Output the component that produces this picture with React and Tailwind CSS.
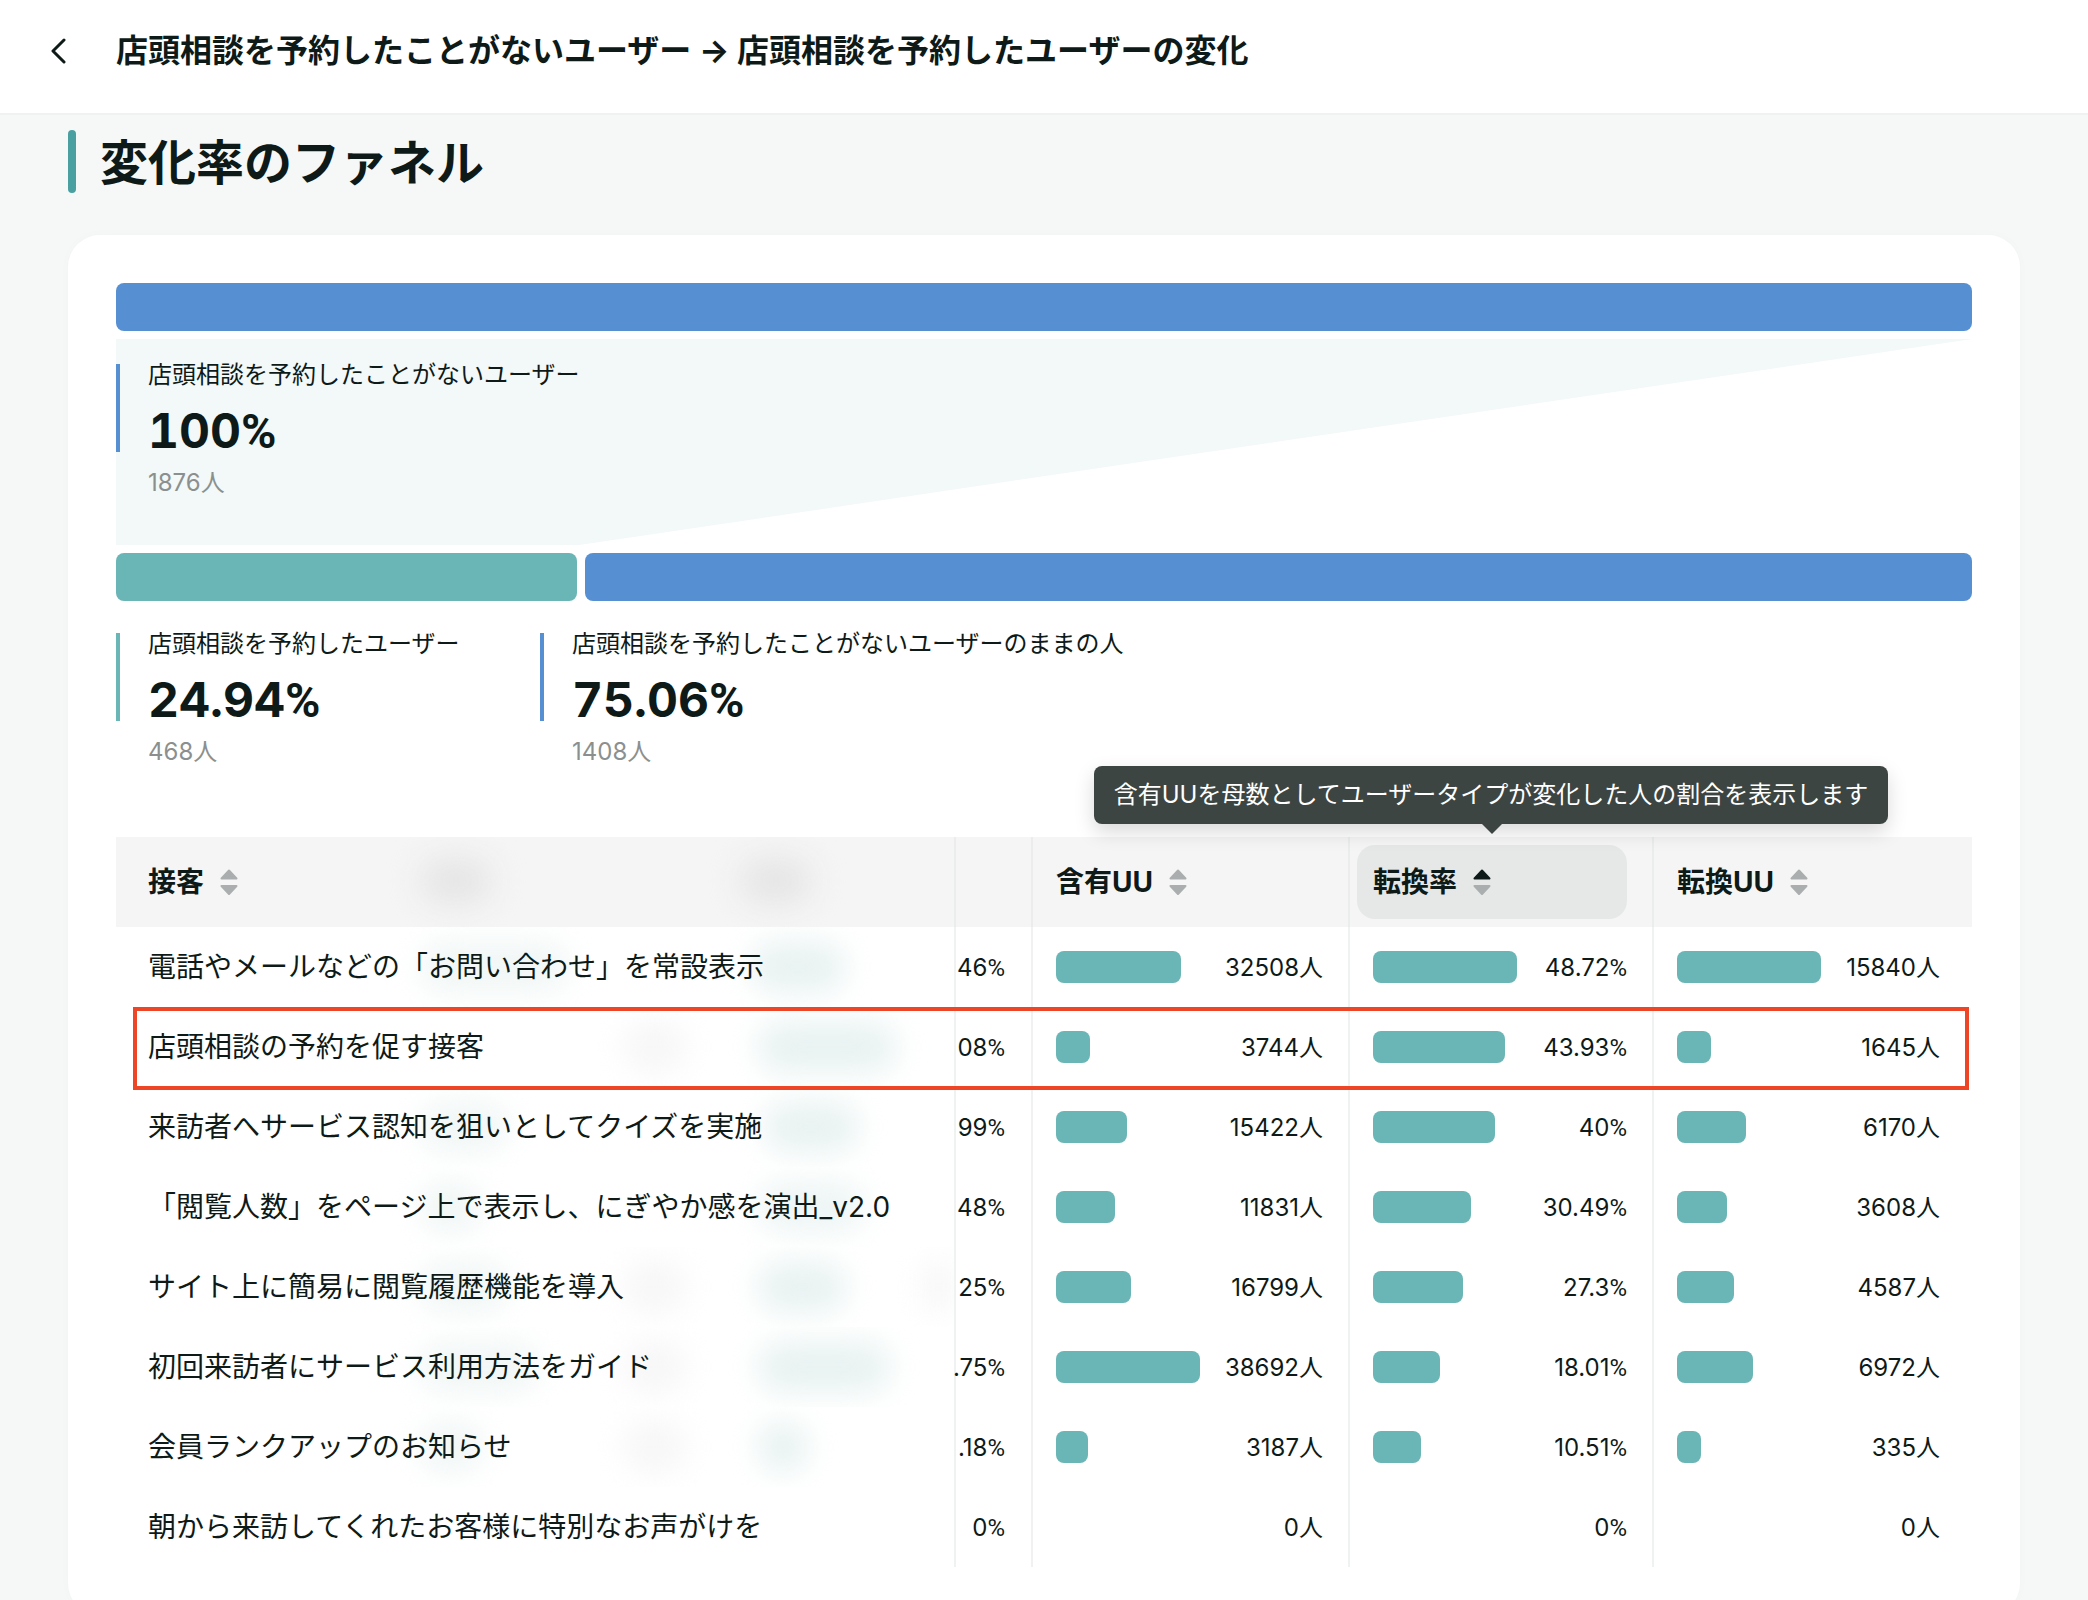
const rows = [
  { name: "電話やメールなどの「お問い合わせ」を常設表示", p: "46", a: [125, "32508人"], b: [144, "48.72"], c: [144, "15840人"], blobs: [[303, 150, "bg-[#f1f7f6]"], [634, 96, "bg-[#e9f3f2]"]] },
  { name: "店頭相談の予約を促す接客", p: "08", a: [34, "3744人"], b: [132, "43.93"], c: [34, "1645人"], blobs: [[507, 64, "bg-[#f7f7f7]"], [641, 140, "bg-[#e9f3f2]"]] },
  { name: "来訪者へサービス認知を狙いとしてクイズを実施", p: "99", a: [71, "15422人"], b: [122, "40"], c: [69, "6170人"], blobs: [[303, 90, "bg-[#f1f7f6]"], [647, 96, "bg-[#e9f3f2]"]] },
  { name: "「閲覧人数」をページ上で表示し、にぎやか感を演出_v2.0", p: "48", a: [59, "11831人"], b: [98, "30.49"], c: [50, "3608人"], blobs: [[303, 64, "bg-[#f1f7f6]"], [641, 108, "bg-[#eef6f5]"]] },
  { name: "サイト上に簡易に閲覧履歴機能を導入", p: "25", a: [75, "16799人"], b: [90, "27.3"], c: [57, "4587人"], blobs: [[303, 90, "bg-[#f1f7f6]"], [507, 64, "bg-[#f7f7f7]"], [641, 90, "bg-[#e9f3f2]"], [806, 33, "bg-[#f7f7f7]"]] },
  { name: "初回来訪者にサービス利用方法をガイド", p: ".75", a: [144, "38692人"], b: [67, "18.01"], c: [76, "6972人"], blobs: [[303, 120, "bg-[#f1f7f6]"], [507, 64, "bg-[#f7f7f7]"], [641, 134, "bg-[#e9f3f2]"]] },
  { name: "会員ランクアップのお知らせ", p: ".18", a: [32, "3187人"], b: [48, "10.51"], c: [24, "335人"], blobs: [[303, 64, "bg-[#f1f7f6]"], [507, 64, "bg-[#f7f7f7]"], [641, 52, "bg-[#e9f3f2]"]] },
  { name: "朝から来訪してくれたお客様に特別なお声がけを", p: "0", a: [0, "0人"], b: [0, "0"], c: [0, "0人"], blobs: [] },
];

function Pct({ v }) {
  return (
    <>
      {v}
      <span className="font-[Roboto,sans-serif]">%</span>
    </>
  );
}

function Sort({ active }) {
  return (
    <svg width="18" height="26" viewBox="0 0 18 26" className="shrink-0">
      <polygon points="9,1.5 16.5,9.5 1.5,9.5" fill={active ? "#0e1a18" : "#abaeae"} stroke={active ? "#0e1a18" : "#abaeae"} strokeWidth="2" strokeLinejoin="round" />
      <polygon points="1.5,17 16.5,17 9,25" fill="#abaeae" stroke="#abaeae" strokeWidth="2" strokeLinejoin="round" />
    </svg>
  );
}

function Stat({ label, pct, count, border }) {
  return (
    <div>
      <div className={`h-[88px] border-l-4 pl-7 ${border}`}>
        <div className="text-[24px] leading-[22px] whitespace-nowrap">{label}</div>
        <div className="mt-[22px] text-[48px] leading-[46px] font-bold tabular-nums"><Pct v={pct} /></div>
      </div>
      <div className="mt-[13px] pl-8 text-[24px] leading-9 text-[#8b908f]">{count}</div>
    </div>
  );
}

function BarCell({ bar, pr, pct }) {
  return (
    <div className={`flex h-20 items-center justify-between border-l-2 border-[#f0f1f1] pl-[23px] ${pr}`}>
      {bar[0] > 0 ? <div className="h-8 rounded-lg bg-[#6ab5b5]" style={{ width: bar[0] }} /> : <div />}
      <div className="relative top-[1px] text-[24px] leading-8">{pct ? <Pct v={bar[1]} /> : bar[1]}</div>
    </div>
  );
}

export default function App() {
  return (
    <div className="h-[1600px] overflow-hidden bg-[#f6f8f7] font-[Inter,'Noto_Sans_CJK_JP',sans-serif] text-[#0e1a18]">
      <header className="flex h-[115px] items-start border-b-2 border-[#f0f2f1] bg-white pl-[49px] pt-[31px]">
        <svg width="18" height="26" viewBox="0 0 18 26" className="mt-[7px]" fill="none" stroke="#0e1a18" strokeWidth="3" strokeLinecap="round" strokeLinejoin="round">
          <path d="M15 2 L4 13 L15 24" />
        </svg>
        <h1 className="ml-[49px] text-[32px] leading-10 font-bold whitespace-nowrap">店頭相談を予約したことがないユーザー → 店頭相談を予約したユーザーの変化</h1>
      </header>

      <main className="px-[68px] pt-[15px]">
        <div className="flex h-[63px] items-center gap-[24px]">
          <div className="h-full w-2 rounded-full bg-[#4a9fa0]" />
          <h2 className="relative top-[1px] text-[48px] leading-[63px] font-bold">変化率のファネル</h2>
        </div>

        <section className="mt-[42px] rounded-[32px] bg-white p-12 shadow-[0_0_12px_rgba(0,0,0,0.02)]">
          <div className="h-12 rounded-lg bg-[#5790d2]" />

          <div className="relative mt-2 h-[206px] pt-[25px]">
            <div className="absolute inset-0 bg-[#f3f8f8] [clip-path:polygon(0_0,100%_0,24.94%_100%,0_100%)]" />
            <div className="relative">
              <Stat label="店頭相談を予約したことがないユーザー" pct="100" count="1876人" border="border-[#5790d2]" />
            </div>
          </div>

          <div className="mt-2 flex gap-2">
            <div className="h-12 w-[461px] rounded-lg bg-[#6ab5b5]" />
            <div className="h-12 flex-1 rounded-lg bg-[#5790d2]" />
          </div>

          <div className="mt-8 flex">
            <div className="w-[424px]">
              <Stat label="店頭相談を予約したユーザー" pct="24.94" count="468人" border="border-[#6ab5b5]" />
            </div>
            <Stat label="店頭相談を予約したことがないユーザーのままの人" pct="75.06" count="1408人" border="border-[#5790d2]" />
          </div>

          <div className="relative mt-[67px]">
            <div className="grid h-[90px] grid-cols-[838px_77px_317px_304px_320px] overflow-hidden bg-[#f5f5f5] text-[28px] font-bold">
              <div className="relative flex items-center gap-4 pl-8">
                <div className="absolute left-[305px] top-[22px] h-[44px] w-[70px] rounded-full bg-[#e4e4e4] blur-[16px]" />
                <div className="absolute left-[625px] top-[22px] h-[44px] w-[70px] rounded-full bg-[#e4e4e4] blur-[16px]" />
                <span>接客</span>
                <Sort />
              </div>
              <div className="border-l-2 border-[#ebecec]" />
              <div className="flex items-center gap-4 border-l-2 border-[#ebecec] pl-[23px]">
                <span>含有UU</span>
                <Sort />
              </div>
              <div className="relative border-l-2 border-[#ebecec]">
                <div className="absolute left-[7px] top-2 bottom-2 w-[270px] rounded-[18px] bg-[#e6e8e8]" />
                <div className="relative flex h-full items-center gap-4 pl-[23px]">
                  <span>転換率</span>
                  <Sort active />
                </div>
              </div>
              <div className="flex items-center gap-4 border-l-2 border-[#ebecec] pl-[23px]">
                <span>転換UU</span>
                <Sort />
              </div>
            </div>

            {rows.map((r) => (
              <div key={r.name} className="grid h-20 grid-cols-[838px_77px_317px_304px_320px]">
                <div className="relative flex items-center overflow-hidden pl-8">
                  {r.blobs.map(([x, w, c]) => (
                    <div key={x} className={`absolute top-[14px] h-[52px] rounded-full blur-[14px] ${c}`} style={{ left: x, width: w }} />
                  ))}
                  <span className="relative text-[28px] leading-10 whitespace-nowrap">{r.name}</span>
                </div>
                <div className="flex h-20 items-center justify-end border-l-2 border-[#f0f1f1] pr-[26px]">
                  <span className="relative top-[1px] text-[24px] leading-8 whitespace-nowrap"><Pct v={r.p} /></span>
                </div>
                <BarCell bar={r.a} pr="pr-[25px]" />
                <BarCell bar={r.b} pr="pr-[25px]" pct />
                <BarCell bar={r.c} pr="pr-[32px]" />
              </div>
            ))}

            <div className="absolute left-[17px] top-[170px] h-[83px] w-[1836px] border-[4px] border-[#ee4526]" />

            <div className="absolute left-[978px] top-[-71px] flex h-[58px] w-[794px] items-center justify-center rounded-lg bg-[#3d4543] text-[24px] whitespace-nowrap text-white shadow-[0_8px_20px_rgba(0,0,0,0.15)]">
              含有UUを母数としてユーザータイプが変化した人の割合を表示します
              <div className="absolute left-[388px] top-full h-0 w-0 border-x-[10px] border-t-[10px] border-x-transparent border-t-[#3d4543]" />
            </div>
          </div>
        </section>
      </main>
    </div>
  );
}
